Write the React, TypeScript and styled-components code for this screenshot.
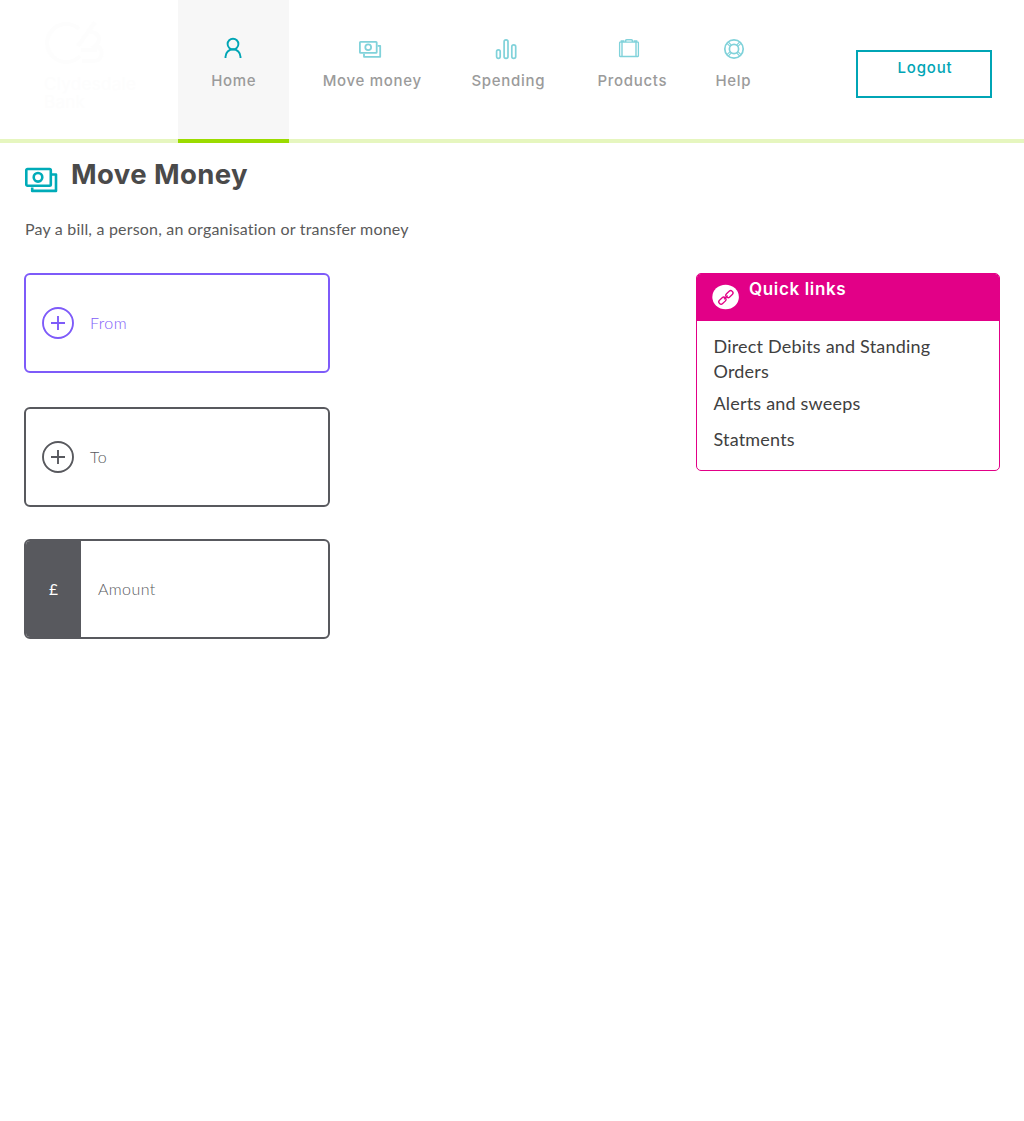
import React from "react";
import styled, { createGlobalStyle } from "styled-components";

const heading = `Inter, "Liberation Sans", sans-serif`;
const body = `Lato, "Liberation Sans", sans-serif`;

const GlobalStyle = createGlobalStyle`
  * { box-sizing: border-box; }
  body { margin: 0; background: #fff; font-family: ${body}; font-variant-ligatures: none; }
  h1, h2, p, ul { margin: 0; padding: 0; }
  svg { display: block; flex: none; }
`;

const Page = styled.div`
  min-height: 1121px;
  background: #fff;
`;

const Header = styled.header`
  display: flex;
  height: 143px;
  border-bottom: 4px solid #e6f6bf;
`;

const Brand = styled.div`
  width: 178px;
  padding: 21px 0 0 44px;
  color: #fdfdfd;
`;

const BrandName = styled.div`
  margin-top: 9px;
  font: 400 17px/18px ${heading};
  letter-spacing: 0.3px;
`;

const BrandLine = styled.div`
  height: 18px;
`;

const Nav = styled.nav`
  display: flex;
`;

const NavItem = styled.a<{ $width: number; $active?: boolean }>`
  display: flex;
  flex-direction: column;
  align-items: center;
  width: ${(p) => p.$width}px;
  height: 143px;
  padding-top: 36px;
  background: ${(p) => (p.$active ? "#f7f7f7" : "transparent")};
  border-bottom: 4px solid ${(p) => (p.$active ? "#9bdb00" : "transparent")};
  color: ${(p) => (p.$active ? "#00a5b5" : "#80d2da")};
`;

const NavIcon = styled.span<{ $shift?: number }>`
  height: 24px;
  margin-left: ${(p) => p.$shift || 0}px;
`;

const NavLabel = styled.span`
  margin-top: 11px;
  margin-right: -0.6px;
  color: #9b9b9b;
  font: 500 15px/20px ${heading};
  letter-spacing: 0.7px;
  white-space: nowrap;
`;

const Logout = styled.button`
  width: 136px;
  height: 48px;
  margin: 50px 32px 0 auto;
  padding: 6px 0 0 2px;
  display: flex;
  justify-content: center;
  background: #fff;
  border: 2px solid #00a5b5;
  color: #00a5b5;
  font: 500 15px/20px ${heading};
  letter-spacing: 0.85px;
`;

const Main = styled.main`
  padding: 12px 24px 0;
`;

const TitleRow = styled.div`
  display: flex;
  align-items: flex-start;
  gap: 13px;
  height: 61px;
  color: #00abb8;
  svg { margin-top: 12px; }
`;

const Title = styled.h1`
  padding-top: 1px;
  color: #4a4a4a;
  font: 700 27.5px/36px ${heading};
  letter-spacing: 0.4px;
`;

const Intro = styled.p`
  height: 57px;
  padding-left: 1px;
  color: #5a5a5a;
  font: 400 16px/26px ${body};
  letter-spacing: 0.19px;
`;

const Columns = styled.div`
  display: flex;
  justify-content: space-between;
  align-items: flex-start;
`;

const Form = styled.div`
  width: 306px;
`;

const Field = styled.div<{ $color: string; $gap: number }>`
  display: flex;
  align-items: center;
  height: 100px;
  margin-bottom: ${(p) => p.$gap}px;
  border: 2px solid ${(p) => p.$color};
  border-radius: 6px;
  color: ${(p) => p.$color};
  overflow: hidden;
`;

const PlusIcon = styled.svg`
  margin: 0 16px;
`;

const Currency = styled.span`
  align-self: stretch;
  width: 55px;
  margin-right: 17px;
  display: flex;
  align-items: center;
  justify-content: center;
  background: #58595e;
  color: #fff;
  font: 400 15.5px/24px ${body};
`;

const FieldLabel = styled.span`
  font: 300 16px/24px ${body};
  letter-spacing: 0.4px;
  padding-bottom: 1px;
`;

const Panel = styled.section`
  width: 304px;
  height: 198px;
  border: 1px solid #e20087;
  border-radius: 5px;
  overflow: hidden;
`;

const PanelHead = styled.div`
  display: flex;
  align-items: flex-start;
  gap: 10px;
  height: 47px;
  padding-left: 15px;
  background: #e20087;
  color: #fff;
  svg { margin-top: 10px; }
`;

const PanelTitle = styled.h2`
  padding-top: 3px;
  font: 600 17px/24px ${heading};
  letter-spacing: 0.65px;
`;

const Links = styled.ul`
  list-style: none;
  padding: 13px 50px 0 16.5px;
  color: #404040;
  font: 400 18px/25px ${body};
  letter-spacing: 0.19px;
`;

const LinkItem = styled.li<{ $gap: number }>`
  margin-bottom: ${(p) => p.$gap}px;
`;

const Logo = () => (
  <svg width="60" height="45" viewBox="0 0 60 45" fill="none" stroke="currentColor" strokeWidth="4">
    <path d="M35 8A19 19 0 1 0 36 35" />
    <path d="M34 25L51 1M46 11C55 11 58 19 51 25C61 26 59 40 50 40H38M37 29H53" />
  </svg>
);

const UserIcon = () => (
  <svg width="24" height="24" viewBox="0 0 24 24" fill="none" stroke="currentColor" strokeWidth="1.9">
    <circle cx="12" cy="8.1" r="5.4" />
    <path d="M4.5 22v-1.2a7.5 7.5 0 0 1 15 0V22" />
  </svg>
);

const MoneyIcon = ({ large = false }: { large?: boolean }) => (
  <svg width={large ? 34 : 24} height={large ? 26 : 24} viewBox={large ? "0 0 34 26" : "0 0 24 24"} fill="none" stroke="currentColor" strokeWidth={large ? 2.6 : 1.8} strokeLinejoin="round">
    {large ? (
      <>
        <rect x="2.3" y="2" width="24.5" height="16.7" rx="1.2" />
        <circle cx="14" cy="10.3" r="4.3" />
        <path d="M28 7.5h4v16.4H8.2V20.4" />
      </>
    ) : (
      <>
        <rect x="1.9" y="5.9" width="16.8" height="11" rx=".7" />
        <circle cx="10.2" cy="11.2" r="2.9" />
        <path d="M19.6 9.8h2.6V20.8H6v-3" />
      </>
    )}
  </svg>
);

const BarsIcon = () => (
  <svg width="24" height="24" viewBox="0 0 24 24" fill="none" stroke="currentColor" strokeWidth="1.7">
    <rect x="2.6" y="13.8" width="3.6" height="8.5" rx="1.7" />
    <rect x="10.1" y="3.9" width="3.9" height="18.4" rx="1.9" />
    <rect x="17.8" y="8.8" width="3.9" height="13.5" rx="1.9" />
  </svg>
);

const CaseIcon = () => (
  <svg width="24" height="24" viewBox="0 0 24 24" fill="none" stroke="currentColor" strokeWidth="1.3">
    <rect x="2.6" y="6.2" width="18.8" height="14.3" rx=".5" />
    <path d="M5 6v14.5M19 6v14.5" strokeWidth="1.4" />
    <path d="M3.6 5.1h3.8M16.6 5.1h3.8M8.6 6V4.7Q8.6 3.7 9.6 3.7h4.8Q15.4 3.7 15.4 4.7V6" strokeWidth="1.6" />
  </svg>
);

const HelpIcon = () => (
  <svg width="24" height="24" viewBox="0 0 24 24" fill="none" stroke="currentColor" strokeWidth="1.7">
    <circle cx="12" cy="13" r="9.2" />
    <circle cx="12" cy="13" r="4.6" />
    <path d="M5 7.3l3.1 3.1M6.3 6l3.1 3.1M17.7 6l-3.1 3.1M19 7.3l-3.1 3.1M5 18.7l3.1-3.1M6.3 20l3.1-3.1M17.7 20l-3.1-3.1M19 18.7l-3.1-3.1" strokeWidth="1.1" />
  </svg>
);

const Plus = () => (
  <PlusIcon width="32" height="32" viewBox="0 0 32 32" fill="none" stroke="currentColor" strokeWidth="1.9">
    <circle cx="16" cy="16" r="15" />
    <path d="M16 9v14M9 16h14" />
  </PlusIcon>
);

const LinkBadge = () => (
  <svg width="27" height="26" viewBox="0 0 27 26" fill="none">
    <ellipse cx="13.6" cy="13" rx="13.3" ry="12.2" fill="#fff" />
    <g stroke="#e20087" strokeWidth="1.3" transform="rotate(-43 13.9 13.4)">
      <rect x="5.1" y="11.1" width="8" height="4.6" rx="2.2" />
      <rect x="14.7" y="11.1" width="8" height="4.6" rx="2.2" />
      <path d="M11.3 13.4h5.2" />
    </g>
  </svg>
);

const navItems = [
  { label: "Home", width: 111, icon: <UserIcon />, shift: -1, active: true },
  { label: "Move money", width: 166, icon: <MoneyIcon />, shift: -4 },
  { label: "Spending", width: 106, icon: <BarsIcon />, shift: -4 },
  { label: "Products", width: 142, icon: <CaseIcon />, shift: -6 },
  { label: "Help", width: 60, icon: <HelpIcon />, shift: 2 },
];

export default function App() {
  return (
    <Page>
      <GlobalStyle />
      <Header>
        <Brand>
          <Logo />
          <BrandName>
            <BrandLine>Clydesdale</BrandLine>
            <BrandLine>Bank</BrandLine>
          </BrandName>
        </Brand>
        <Nav>
          {navItems.map((item) => (
            <NavItem key={item.label} $width={item.width} $active={item.active}>
              <NavIcon $shift={item.shift}>{item.icon}</NavIcon>
              <NavLabel>{item.label}</NavLabel>
            </NavItem>
          ))}
        </Nav>
        <Logout>Logout</Logout>
      </Header>
      <Main>
        <TitleRow>
          <MoneyIcon large />
          <Title>Move Money</Title>
        </TitleRow>
        <Intro>Pay a bill, a person, an organisation or transfer money</Intro>
        <Columns>
          <Form>
            <Field $color="#7e5bf9" $gap={34}><Plus /><FieldLabel>From</FieldLabel></Field>
            <Field $color="#58595e" $gap={32}><Plus /><FieldLabel>To</FieldLabel></Field>
            <Field $color="#58595e" $gap={0}><Currency>£</Currency><FieldLabel>Amount</FieldLabel></Field>
          </Form>
          <Panel>
            <PanelHead>
              <LinkBadge />
              <PanelTitle>Quick links</PanelTitle>
            </PanelHead>
            <Links>
              <LinkItem $gap={7}>Direct Debits and Standing Orders</LinkItem>
              <LinkItem $gap={11}>Alerts and sweeps</LinkItem>
              <LinkItem $gap={0}>Statments</LinkItem>
            </Links>
          </Panel>
        </Columns>
      </Main>
    </Page>
  );
}
